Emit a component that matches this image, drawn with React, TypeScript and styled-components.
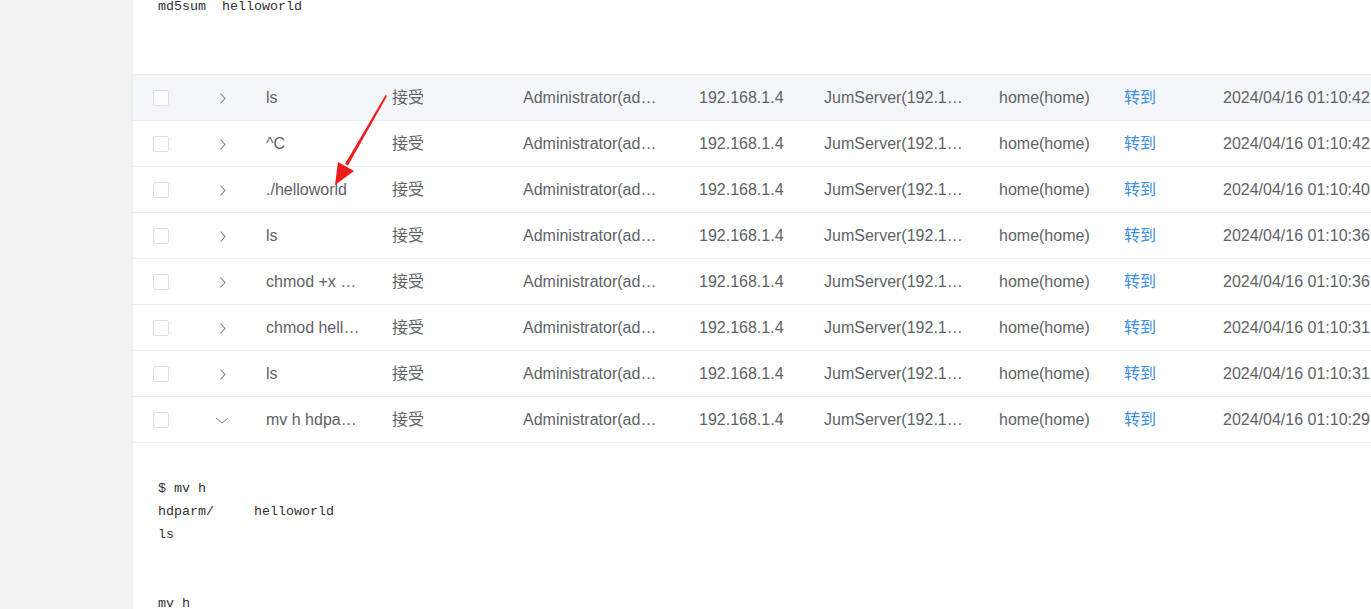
import styled, { createGlobalStyle } from "styled-components";

const GlobalStyle = createGlobalStyle`
    html, body {
        margin: 0;
        padding: 0;
        height: 609px;
        overflow: hidden;
        background: #ffffff;
    }
`

const Pagina = styled.div`
    display: flex;
    height: 609px;
    font-family: "Liberation Sans", "Noto Sans CJK SC", sans-serif;
`

const BarraLateral = styled.aside`
    width: 132px;
    flex-shrink: 0;
    background: #f2f2f2;
    border-right: 1px solid #e9ecf2;
`

const Conteudo = styled.main`
    position: relative;
    flex: 1;
    overflow: hidden;
`

const PainelTerminal = styled.div<{ $topo?: string; $altura?: string }>`
    padding: ${p => p.$topo || '0'} 25px 0 25px;
    height: ${p => p.$altura || 'auto'};
    overflow: hidden;
`

const TextoTerminal = styled.pre<{ $deslocamento?: string }>`
    margin: ${p => p.$deslocamento || '0'} 0 0 0;
    font-family: "Liberation Mono", monospace;
    font-size: 13.33px;
    line-height: 23px;
    color: #303133;
    white-space: pre;
`

const Linha = styled.div<{ $destaque?: boolean }>`
    display: grid;
    grid-template-columns: 65px 48px 126px 131px 176px 125px 175px 125px 99px auto;
    align-items: center;
    height: 45px;
    padding-left: 20px;
    border-bottom: 1px solid #ebeef5;
    background: ${p => p.$destaque ? '#f5f6fa' : '#ffffff'};
    font-size: 16px;
    line-height: 20px;
    color: #606266;
    white-space: nowrap;
`

const LinhaTopo = styled.div`
    border-top: 1px solid #ebeef5;
`

const Celula = styled.div<{ $folga?: string; $livre?: boolean }>`
    display: flex;
    align-items: center;
    height: 20px;
    overflow: ${p => p.$livre ? 'visible' : 'hidden'};
    padding-right: ${p => p.$folga || '0'};
`

const Texto = styled.span`
    overflow: hidden;
    text-overflow: ellipsis;
`

const Caixa = styled.span`
    display: block;
    width: 14px;
    height: 14px;
    border: 1px solid #dcdfe6;
    border-radius: 2px;
    background: #ffffff;
`

const Link = styled.a`
    color: #3a8ee6;
    text-decoration: none;
    cursor: pointer;
`

const Seta = styled.svg`
    position: absolute;
    left: 0;
    top: 0;
    pointer-events: none;
`

type Registro = {
    comando: string;
    hora: string;
    aberto?: boolean;
}

const registros: Registro[] = [
    { comando: 'ls', hora: '01:10:42' },
    { comando: '^C', hora: '01:10:42' },
    { comando: './helloworld', hora: '01:10:40' },
    { comando: 'ls', hora: '01:10:36' },
    { comando: 'chmod +x helloworld', hora: '01:10:36' },
    { comando: 'chmod helloworld', hora: '01:10:31' },
    { comando: 'ls', hora: '01:10:31' },
    { comando: 'mv h hdparm/', hora: '01:10:29', aberto: true },
]

function Chevron({ aberto }: { aberto?: boolean }) {
    return aberto ? (
        <svg width="16" height="14" viewBox="0 0 16 14" style={{ display: 'block', marginLeft: '-4px' }}>
            <path d="M2 5 L8 10 L14 5" fill="none" stroke="#7a7f88" strokeWidth="1" />
        </svg>
    ) : (
        <svg width="10" height="14" viewBox="0 0 10 14" style={{ display: 'block' }}>
            <path d="M2.5 2.5 L7 7.5 L2.5 12.5" fill="none" stroke="#7a7f88" strokeWidth="1.1" />
        </svg>
    )
}

function App() {
    return (
        <>
            <GlobalStyle />
            <Pagina>
                <BarraLateral />
                <Conteudo>
                    <PainelTerminal $altura="74px">
                        <TextoTerminal $deslocamento="-5px">md5sum  helloworld</TextoTerminal>
                    </PainelTerminal>
                    <LinhaTopo />
                    {registros.map((r, i) => (
                        <Linha key={i} $destaque={i === 0}>
                            <Celula><Caixa /></Celula>
                            <Celula $livre><Chevron aberto={r.aberto} /></Celula>
                            <Celula $folga="30px"><Texto>{r.comando}</Texto></Celula>
                            <Celula><Texto>接受</Texto></Celula>
                            <Celula $folga="38px"><Texto>Administrator(admin)</Texto></Celula>
                            <Celula><Texto>192.168.1.4</Texto></Celula>
                            <Celula $folga="30px"><Texto>JumServer(192.168.1.4)</Texto></Celula>
                            <Celula><Texto>home(home)</Texto></Celula>
                            <Celula><Link>转到</Link></Celula>
                            <Celula><Texto>2024/04/16 {r.hora}</Texto></Celula>
                        </Linha>
                    ))}
                    <PainelTerminal $topo="11px">
                        <TextoTerminal>{'\n$ mv h\nhdparm/     helloworld\nls\n\n\nmv h'}</TextoTerminal>
                    </PainelTerminal>
                    <Seta width="300" height="200">
                        <polygon points="254,96 252.5,95 212,164 215,165.5" fill="#f01a1a" />
                        <polygon points="202,185 205,162 221,171" fill="#f01a1a" />
                    </Seta>
                </Conteudo>
            </Pagina>
        </>
    )
}

export default App;
